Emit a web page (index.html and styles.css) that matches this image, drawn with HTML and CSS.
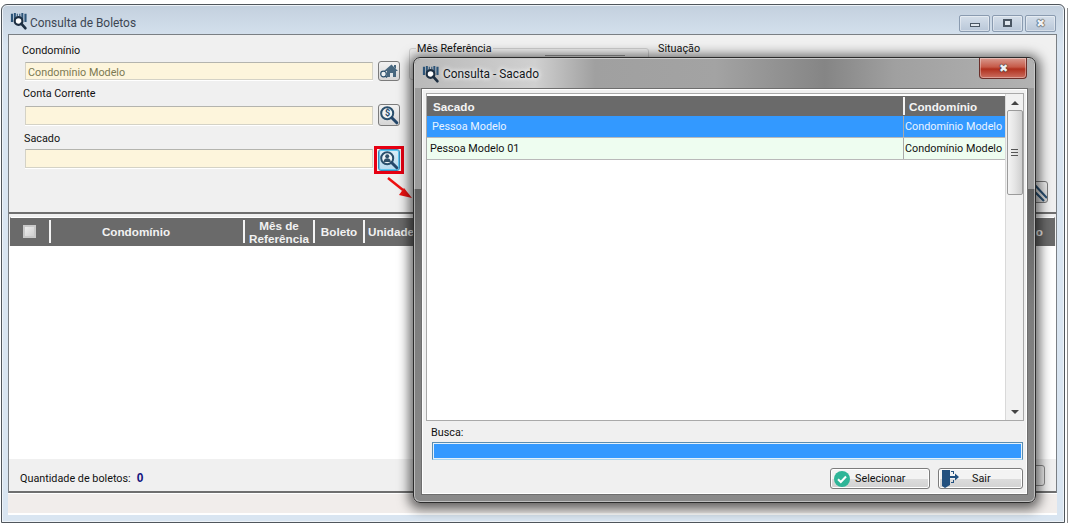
FILE: index.html
```html
<!DOCTYPE html>
<html lang="pt">
<head>
<meta charset="utf-8">
<title>Consulta de Boletos</title>
<link rel="stylesheet" href="styles.css">
</head>
<body>
<svg class="defs" width="0" height="0" aria-hidden="true">
  <defs>
    <symbol id="logo" viewBox="0 0 20 20">
      <path d="M1 2h2.400v9H1zM4.300 1h2.200v7H4.300zM12.600 1h2.200v7h-2.200zM16 2h2.400v9H16z" fill="#2c5478"/>
      <path d="M7.500 2h1.200v3H7.500zM10.300 2h1.200v3h-1.200z" fill="#2c5478"/>
      <circle cx="9.500" cy="10" r="4.300" fill="#fff" stroke="#1d2f42" stroke-width="2.400"/>
      <path d="M12.500 13l4.500 5" stroke="#1d2f42" stroke-width="3" stroke-linecap="round"/>
    </symbol>
    <symbol id="lens" viewBox="0 0 20 20">
      <circle cx="8.200" cy="8.200" r="6" fill="#eef3f5" stroke="#2a4f6c" stroke-width="2"/>
      <path d="M12.800 12.800l5 5" stroke="#24476a" stroke-width="3" stroke-linecap="round"/>
    </symbol>
  </defs>
</svg>

<div class="edge"></div>

<div class="window">
  <header class="titlebar">
    <svg class="logo logo-main"><use href="#logo"/></svg>
    <span class="window-title">Consulta de Boletos</span>
    <div class="caption">
      <span class="cap-btn"><i class="glyph-min"></i></span>
      <span class="cap-btn"><i class="glyph-max"></i></span>
      <span class="cap-btn cap-x">&#10006;</span>
    </div>
  </header>

  <main class="content">
    <section class="filters">
      <div class="field-col">
        <label class="lbl lbl-a">Condomínio</label>
        <div class="field-row row-a">
          <span class="input input-short">Condomínio Modelo</span>
          <button class="icon-btn btn-short">
            <svg width="20" height="18" viewBox="0 0 20 18">
              <path d="M5 9L12.500 2.500 19 9h-2v6H8V9z" fill="#47677f"/>
              <path d="M11 15v-4h3v4z" fill="#dfe4e7"/>
              <path d="M15 3h2v4l-2-2z" fill="#47677f"/>
              <circle cx="4.500" cy="12" r="2.800" fill="#eef3f5" stroke="#2a4f6c" stroke-width="1.200"/>
              <path d="M6.500 14l1.500 1.500" stroke="#2a4f6c" stroke-width="1.500"/>
            </svg>
          </button>
        </div>
        <label class="lbl lbl-b">Conta Corrente</label>
        <div class="field-row row-b">
          <span class="input"></span>
          <button class="icon-btn">
            <svg class="lens-icon"><use href="#lens"/></svg>
            <span class="lens-sign">$</span>
          </button>
        </div>
        <label class="lbl lbl-c">Sacado</label>
        <div class="field-row row-c">
          <span class="input"></span>
          <span class="highlight">
            <button class="icon-btn focused">
              <svg class="lens-icon" viewBox="0 0 20 20">
                <circle cx="8.200" cy="8.200" r="6" fill="#eef3f5" stroke="#2a4f6c" stroke-width="2"/>
                <circle cx="8.200" cy="6.300" r="2" fill="#2f4f68"/>
                <path d="M4.500 12c.3-3 1.800-3.800 3.700-3.800s3.400.8 3.700 3.800z" fill="#2f4f68"/>
                <path d="M12.800 12.800l5 5" stroke="#24476a" stroke-width="3" stroke-linecap="round"/>
              </svg>
            </button>
          </span>
        </div>
      </div>
      <fieldset class="month">
        <legend class="legend">Mês Referência</legend>
        <span class="month-control"></span>
      </fieldset>
      <div class="status-col">
        <span class="lbl">Situação</span>
        <button class="icon-btn clear-btn">
          <svg width="20" height="20" viewBox="0 0 20 20"><path d="M5 0l15 16M5 7l12 12" stroke="#2b5172" stroke-width="2.200" fill="none"/></svg>
        </button>
      </div>
    </section>

    <section class="grid">
      <div class="grid-head">
        <span class="gh gh-check"><i class="check"></i></span>
        <span class="gh gh-cond">Condomínio</span>
        <span class="gh gh-month">Mês de<br>Referência</span>
        <span class="gh gh-bol">Boleto</span>
        <span class="gh gh-uni">Unidade</span>
        <span class="gh gh-end">Situação</span>
      </div>
      <div class="grid-body"></div>
    </section>

    <footer class="summary">
      <span class="count-label">Quantidade de boletos:</span>
      <b class="count">0</b>
      <span class="hidden-btn"></span>
    </footer>
  </main>
  <div class="statusbar"></div>
</div>

<svg class="arrow" width="30" height="26" viewBox="0 0 30 26" aria-hidden="true">
  <path d="M1 1l15 12" stroke="#ee1111" stroke-width="2.500"/>
  <path d="M25 21l-13-3 5-7z" fill="#ee1111"/>
</svg>

<div class="dialog">
  <header class="dialog-bar">
    <svg class="logo logo-dialog"><use href="#logo"/></svg>
    <span class="dialog-title">Consulta - Sacado</span>
    <span class="close">&#10006;</span>
  </header>
  <div class="dialog-body">
    <div class="list">
      <div class="list-main">
        <div class="list-head">
          <span class="col-a head-cell">Sacado</span>
          <span class="col-b head-cell">Condomínio</span>
        </div>
        <div class="list-row selected">
          <span class="col-a sel-a">Pessoa Modelo</span>
          <span class="col-b">Condomínio Modelo</span>
        </div>
        <div class="list-row alt">
          <span class="col-a">Pessoa Modelo 01</span>
          <span class="col-b">Condomínio Modelo</span>
        </div>
      </div>
      <div class="scrollbar">
        <i class="arrow-up"></i>
        <div class="thumb"><i class="grip"></i></div>
        <i class="arrow-down"></i>
      </div>
    </div>
    <label class="search-label">Busca:</label>
    <div class="search"></div>
    <div class="actions">
      <button class="action act-sel">
        <svg width="18" height="18" viewBox="0 0 18 18">
          <circle cx="9" cy="9" r="8" fill="#2fb597"/>
          <path d="M5 9.300l2.800 2.700L13 6.500" fill="none" stroke="#fff" stroke-width="2"/>
        </svg>
        <span>Selecionar</span>
      </button>
      <button class="action act-exit">
        <svg width="18" height="20" viewBox="0 0 18 20">
          <path d="M1 1h8v15l-5 3-3-2z" fill="#23517f"/>
          <path d="M10 2h3v3h-1V3h-2zM10 13h2v-2h1v3h-3z" fill="#23517f"/>
          <path d="M9 7h5V4.500L18 8l-4 3.500V9H9z" fill="#23517f"/>
        </svg>
        <span class="exit-text">Sair</span>
      </button>
    </div>
  </div>
</div>
</body>
</html>
```

FILE: styles.css
```css
* { box-sizing: border-box; }
html, body { margin: 0; height: 100%; overflow: hidden; }
body {
  position: relative;
  width: 1069px;
  height: 527px;
  background: #fff;
  font-family: Roboto, "Liberation Sans", Arial, sans-serif;
  font-size: 10.8px;
  color: #111;
}
.defs { position: absolute; }
button { font: inherit; padding: 0; }

.edge {
  position: absolute;
  left: 1067px;
  top: 8px;
  bottom: 4px;
  width: 1px;
  background: #8c8c8c;
}

.window {
  position: absolute;
  left: 1px;
  top: 4px;
  width: 1064px;
  height: 519px;
  border: 1px solid #50565c;
  border-radius: 6px 6px 0 0;
  background: linear-gradient(#c3d0de, #d9e5f1 40px);
  box-shadow: inset 0 0 0 1px #eef3f8;
  display: flex;
  flex-direction: column;
  padding: 0 7px 7px 6px;
}
.titlebar {
  height: 29px;
  flex: none;
  display: flex;
  align-items: center;
  padding-left: 2px;
}
.logo { width: 18px; height: 18px; flex: none; }
.logo-main { margin-top: 3px; }
.logo-dialog { margin-top: 1px; }
.window-title {
  margin-left: 2px;
  font-size: 11.9px;
  color: #3c4652;
  padding-top: 6px;
}
.caption {
  margin-left: auto;
  display: flex;
  gap: 2px;
  margin-right: 1px;
  margin-top: 7px;
}
.cap-btn {
  width: 31px;
  height: 17px;
  border: 1px solid #8a9bb0;
  border-radius: 2px;
  background: linear-gradient(#d5dfea, #b9c7d8);
  display: flex;
  align-items: center;
  justify-content: center;
  box-shadow: inset 0 0 0 1px rgba(255,255,255,.4);
}
.glyph-min { width: 10px; height: 4px; margin-top: 4px; background: #dfe6ed; border: 1px solid #4a5663; }
.glyph-max { width: 9px; height: 8px; background: #dfe6ed; border: 2px solid #4a5663; }
.cap-x { font-size: 11px; color: #edf1f5; text-shadow: 0 0 1px #333, 0 0 1px #333, 0 0 1px #333; }

.content {
  flex: 1;
  min-height: 0;
  display: flex;
  flex-direction: column;
  border: 1px solid #7a7f84;
  border-bottom: 0;
  background: #f0f0f0;
}
.filters {
  height: 179px;
  flex: none;
  display: flex;
  border-bottom: 2px solid #6f6f6f;
  padding: 0 0 0 13px;
}
.field-col { width: 387px; flex: none; display: flex; flex-direction: column; }
.lbl { display: block; height: 14px; line-height: 16px; }
.lbl-a { margin-top: 8px; }
.lbl-b { margin-top: 5px; margin-left: 1px; }
.lbl-c { margin-top: 5px; margin-left: 2px; }
.field-row { display: flex; align-items: center; margin-left: 3px; gap: 5px; position: relative; }
.row-a { margin-top: 4px; }
.row-b { margin-top: 4px; }
.row-c { margin-top: 4px; }
.input {
  width: 348px;
  height: 19px;
  background: #fdf5dc;
  border: 1px solid #d4d2c6;
  border-top-color: #b4b4ae;
  color: #7c7a52;
  padding: 1px 2px;
  line-height: 17px;
  white-space: nowrap;
  box-shadow: 0 1px 0 #fff;
}
.input-short { height: 18px; }
.icon-btn {
  position: relative;
  width: 22px;
  height: 22px;
  flex: none;
  border: 1px solid #7b7b7b;
  border-radius: 3px;
  background: linear-gradient(#f2f2f2, #d6d6d6);
  display: flex;
  align-items: center;
  justify-content: center;
}
.btn-short { height: 20px; }
.lens-icon { width: 20px; height: 20px; }
.lens-sign {
  position: absolute;
  left: 6px;
  top: 3px;
  font-size: 9px;
  line-height: 11px;
  font-weight: bold;
  color: #24476a;
}
.highlight {
  position: absolute;
  left: 349px;
  top: -3px;
  width: 30px;
  height: 28px;
  border: 3px solid #e60012;
  display: flex;
  align-items: center;
  justify-content: center;
}
.focused {
  border-color: #3a87b5;
  box-shadow: inset 0 0 0 1px #5fc6ef;
  background: linear-gradient(#ddeef8, #b6d9ee);
}
.month {
  width: 240px;
  height: 39px;
  margin: 6px 0 0 0;
  padding: 0;
  border: 1px solid #d0d0d0;
  border-radius: 3px;
}
.legend { padding: 0 1px; margin-left: 6px; height: 14px; line-height: 16px; }
.month-control {
  display: block;
  width: 80px;
  height: 14px;
  margin: 0 0 0 135px;
  border-top: 1px solid #9a9a9a;
}
.status-col {
  flex: 1;
  display: flex;
  flex-direction: column;
  margin-left: 9px;
  padding-top: 6px;
}
.clear-btn {
  margin-top: 126px;
  margin-left: auto;
  margin-right: 8px;
}

.grid {
  flex: 1;
  min-height: 0;
  display: flex;
  flex-direction: column;
  padding-top: 3px;
}
.grid-head {
  height: 29px;
  flex: none;
  margin: 0 1px 0 1px;
  display: flex;
  background: #6a6a6a;
  color: #f2f2f2;
  font-family: "Liberation Sans", Arial, sans-serif;
  font-weight: bold;
  font-size: 11.7px;
  border: 1px solid #6a6a6a;
  border-top-color: #fff;
  box-shadow: inset 0 1px 0 #6a6a6a;
}
.gh {
  display: flex;
  align-items: center;
  justify-content: center;
  text-align: center;
  line-height: 13px;
  border-right: 2px solid #f4f4f4;
  margin: 2px 0 2px;
  flex: none;
  overflow: hidden;
  white-space: nowrap;
}
.gh-check { width: 40px; padding-right: 2px; }
.gh-cond { width: 194px; padding-right: 22px; }
.gh-month { width: 70px; }
.gh-bol { width: 50px; }
.gh-uni { width: 60px; justify-content: flex-start; padding-left: 3px; }
.gh-end { flex: 1; border-right: 0; justify-content: flex-end; padding-right: 11px; }
.check {
  width: 13px;
  height: 13px;
  border: 2px solid #c9c9c9;
  background: linear-gradient(135deg, #eee, #cfcfcf);
}
.grid-body { flex: 1; background: #fff; }

.summary {
  height: 34px;
  flex: none;
  display: flex;
  align-items: center;
  padding: 6px 0 0 11px;
  border-bottom: 2px solid #6f6f6f;
}
.count { margin-left: 6px; color: #13137f; font-size: 12px; font-family: "Liberation Sans", Arial, sans-serif; }
.hidden-btn {
  margin-left: auto;
  margin-right: 11px;
  width: 90px;
  height: 21px;
  margin-top: -6px;
  border: 1px solid #8b8b8b;
  border-radius: 3px;
  background: #eee;
}
.statusbar {
  height: 22px;
  flex: none;
  background: #f1edeb;
  border-bottom: 2px solid #fff;
  border-top: 1px solid #fff;
}

.arrow { position: absolute; left: 387px; top: 177px; }

.dialog {
  position: absolute;
  left: 413px;
  top: 57px;
  width: 623px;
  height: 446px;
  border: 1px solid #2b2b2b;
  border-radius: 7px;
  background:
    linear-gradient(#9c9c9c 0, #9c9c9c 131px, #606060 131px, #7d7d7d 250px, #8a8a8a 100%);
  box-shadow: 0 2px 12px 4px rgba(0,0,0,.6), inset 0 0 0 1px rgba(255,255,255,.45);
  padding: 0 7px 7px 7px;
  display: flex;
  flex-direction: column;
}
.dialog-bar {
  position: relative;
  height: 29px;
  flex: none;
  display: flex;
  align-items: center;
  margin: 1px -6px 0;
  padding: 0 7px;
  border-radius: 6px 6px 0 0;
  background: linear-gradient(90deg, #b9b9b9 0, #d0d0d0 120px, #a0a0a0 180px, #a3a3a3 300px, #858585 410px, #a0a0a0 480px, #b2b2b2 100%);
}
.dialog-title {
  margin-left: 3px;
  font-size: 11.9px;
  color: #14181c;
  text-shadow: 0 0 6px #fff, 0 0 4px #fff;
}
.close {
  position: absolute;
  right: 7px;
  top: -1px;
  width: 48px;
  height: 21px;
  border: 1px solid #6b2f2a;
  border-top: 0;
  border-radius: 0 0 4px 4px;
  background: linear-gradient(#d99a8f, #c65a48 45%, #b0301e 55%, #cb6f60);
  box-shadow: inset 0 0 0 1px rgba(255,255,255,.35);
  color: #eef0f2;
  font-size: 11px;
  display: flex;
  align-items: center;
  justify-content: center;
  text-shadow: 0 0 1px #333, 0 0 1px #333, 0 0 1px #333;
}
.dialog-body {
  flex: 1;
  min-height: 0;
  background: #f0f0f0;
  border: 1px solid #6e6e6e;
  box-shadow: inset 0 0 0 1px #fff;
  padding: 4px 3px 5px 4px;
  display: flex;
  flex-direction: column;
}
.list {
  height: 328px;
  flex: none;
  display: flex;
  border: 1px solid #a9a9a9;
  background: #fff;
  padding: 2px 0 0 0;
}
.list-main { flex: 1; min-width: 0; }
.scrollbar {
  width: 18px;
  flex: none;
  margin-top: -2px;
  background: #f1f1f1;
  border-left: 1px solid #d9d9d9;
  display: flex;
  flex-direction: column;
  align-items: center;
}
.arrow-up {
  margin-top: 7px;
  width: 0; height: 0;
  border: 4px solid transparent;
  border-top: 0;
  border-bottom: 4px solid #444;
}
.thumb {
  margin-top: 5px;
  width: 16px;
  height: 85px;
  border: 1px solid #9b9b9b;
  border-radius: 2px;
  background: linear-gradient(90deg, #f4f4f4, #e4e4e4 50%, #cfcfcf);
  display: flex;
  align-items: center;
  justify-content: center;
}
.grip {
  width: 7px;
  height: 7px;
  background: repeating-linear-gradient(#555 0 1px, transparent 1px 3px);
}
.arrow-down {
  margin-top: auto;
  margin-bottom: 6px;
  width: 0; height: 0;
  border: 4px solid transparent;
  border-bottom: 0;
  border-top: 4px solid #444;
}
.list-head {
  height: 20px;
  display: flex;
  background: #6a6a6a;
  color: #f4f4f4;
  font-family: "Liberation Sans", Arial, sans-serif;
  font-weight: bold;
  font-size: 11.7px;
  align-items: stretch;
}
.head-cell { display: flex; align-items: center; }
.head-cell.col-a { padding-left: 6px; }
.head-cell.col-b { border-left: 2px solid #f4f4f4; padding-left: 4px; margin: 1px 0; }
.col-a { width: 476px; flex: none; padding-left: 3px; }
.col-b { flex: 1; min-width: 0; white-space: nowrap; padding-left: 1px; }
.list-row {
  height: 22px;
  display: flex;
  align-items: center;
  line-height: 21px;
  border-bottom: 1px solid #b9b9b9;
}
.list-row .col-b { border-left: 1px solid #a9a9a9; height: 100%; }
.selected { background: #3399ff; color: #eaf4ff; }
.sel-a { padding-left: 5px; }
.alt { background: #eefdf0; }
.search-label { margin: 4px 0 0 5px; height: 14px; line-height: 16px; }
.search {
  height: 18px;
  margin: 3px 0 0 6px;
  width: 591px;
  background: #3399ff;
  border: 1px solid #5a8db0;
  border-bottom-color: #a9d4ef;
  box-shadow: inset 0 0 0 1px #e4f1fa;
}
.actions {
  display: flex;
  justify-content: flex-end;
  gap: 8px;
  margin-top: 8px;
  margin-right: 1px;
}
.action {
  height: 21px;
  border: 1px solid #7c7c7c;
  border-radius: 3px;
  background: linear-gradient(#f3f3f3 50%, #dcdcdc 52%, #d2d2d2);
  display: flex;
  align-items: center;
  color: #111;
  box-shadow: inset 0 0 0 1px #fff;
}
.act-sel { width: 100px; padding-left: 2px; gap: 4px; }
.act-exit { width: 85px; padding-left: 2px; }
.exit-text { margin-left: 13px; }
```
